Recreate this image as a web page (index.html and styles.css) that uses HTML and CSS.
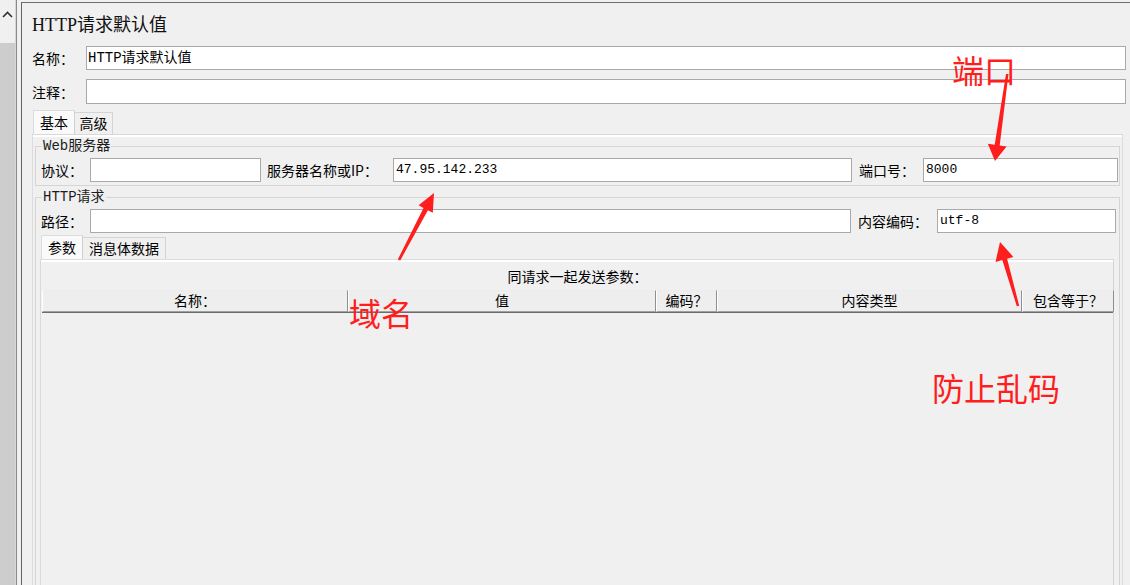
FILE: index.html
```html
<!DOCTYPE html>
<html lang="zh-CN">
<head>
<meta charset="utf-8">
<title>HTTP请求默认值</title>
<link rel="stylesheet" href="styles.css">
</head>
<body>
<div class="app">
  <div class="scroll">
    <div class="scroll-up">
      <svg width="11" height="7" viewBox="0 0 11 7"><polyline points="1,6 5.5,1.5 10,6" fill="none" stroke="#333" stroke-width="1.6"/></svg>
    </div>
    <div class="thumb"></div>
  </div>
  <div class="split"></div>
  <div class="main">
    <div class="title">HTTP请求默认值</div>
    <div class="row">
      <span class="lbl lbl-top">名称：</span>
      <div class="input input-name">HTTP请求默认值</div>
    </div>
    <div class="row">
      <span class="lbl lbl-top">注释：</span>
      <div class="input input-tall"></div>
    </div>
    <div class="tabs">
      <div class="tab active tab-basic">基本</div>
      <div class="tab tab-adv">高级</div>
    </div>
    <div class="tabpanel">
      <fieldset class="group">
        <legend>Web服务器</legend>
        <div class="frow">
          <span class="lbl w-proto">协议：</span>
          <div class="input w-in-proto"></div>
          <span class="lbl w-server">服务器名称或IP：</span>
          <div class="input w-in-server">47.95.142.233</div>
          <span class="lbl w-port">端口号：</span>
          <div class="input w-in-port">8000</div>
        </div>
      </fieldset>
      <fieldset class="group group-http">
        <legend>HTTP请求</legend>
        <div class="frow">
          <span class="lbl w-proto">路径：</span>
          <div class="input w-in-path"></div>
          <span class="lbl w-enc">内容编码：</span>
          <div class="input w-in-enc">utf-8</div>
        </div>
        <div class="tabs subtabs">
          <div class="tab active sub-a">参数</div>
          <div class="tab sub-b">消息体数据</div>
        </div>
        <div class="subpanel">
          <div class="caption">同请求一起发送参数：</div>
          <div class="thead">
            <div class="th">名称：</div>
            <div class="th">值</div>
            <div class="th">编码？</div>
            <div class="th">内容类型</div>
            <div class="th">包含等于？</div>
          </div>
          <div class="tbody"></div>
        </div>
      </fieldset>
    </div>
  </div>
</div>

<svg class="arrows" width="1130" height="585" viewBox="0 0 1130 585">
  <polygon fill="#fe1e1e" points="1006,74 1008.5,74 999.7,145.4 1006.6,146.4 995,161 987.8,143.8 994.7,144.8"/>
  <polygon fill="#fe1e1e" points="397.8,259.5 400.2,260.5 427.9,210.2 432.8,212.7 434,193 418.6,205.3 423.5,207.9"/>
  <polygon fill="#fe1e1e" points="1016.8,306.3 1019.2,305.7 1007.1,258.7 1013.4,256.9 1000,242 995.5,261.9 1002.3,260.1"/>
</svg>
<div class="note note-port">端口</div>
<div class="note note-domain">域名</div>
<div class="note note-enc">防止乱码</div>
</body>
</html>
```

FILE: styles.css
```css
html, body {
  margin: 0;
  padding: 0;
}
body {
  width: 1130px;
  height: 585px;
  overflow: hidden;
  position: relative;
  background: #f0f0f0;
  font-family: "Noto Sans CJK SC", sans-serif;
  font-size: 14px;
  color: #000;
}
.app {
  display: flex;
  height: 585px;
}
.scroll {
  width: 15px;
  border-right: 1px solid #d6d6d6;
  display: flex;
  flex-direction: column;
}
.scroll-up {
  height: 43px;
  box-sizing: border-box;
  padding-top: 11px;
  display: flex;
  justify-content: center;
}
.thumb {
  flex: 1;
  background: #cdcdcd;
}
.split {
  width: 4px;
  border-left: 1px solid #8a8a8a;
}
.main {
  flex: 1;
  min-width: 0;
  margin-top: 2px;
  border-top: 1px solid #6e6e6e;
  border-left: 1px solid #646464;
  padding: 0 4px 0 10px;
  display: flex;
  flex-direction: column;
}
.title {
  margin-top: 10px;
  height: 24px;
  line-height: 24px;
  font-family: "Liberation Serif", "Noto Sans CJK SC", serif;
  font-size: 18px;
  color: #111;
}
.row {
  display: flex;
  align-items: center;
  margin-top: 9px;
}
.lbl {
  font-size: 14px;
  line-height: 20px;
  white-space: nowrap;
  flex: none;
}
.lbl-top {
  width: 54px;
}
.input {
  height: 24px;
  box-sizing: border-box;
  border: 1px solid #a9a9a9;
  background: #fff;
  font-family: "Liberation Mono", "Noto Sans CJK SC", monospace;
  font-size: 13px;
  line-height: 22px;
  padding-left: 2px;
  white-space: nowrap;
  flex: none;
}
.row .input {
  flex: 1;
}
.input-name {
  font-size: 14px;
  padding-left: 1px;
}
.input-tall {
  height: 25px;
}
.tabs {
  display: flex;
  align-items: flex-end;
  margin-top: 6px;
  margin-left: 1px;
}
.tab {
  height: 22px;
  line-height: 21px;
  box-sizing: border-box;
  border-top: 1px solid #d4d4d4;
  border-right: 1px solid #d4d4d4;
  background: #f0f0f0;
  font-size: 14px;
  text-align: center;
  white-space: nowrap;
}
.tab.active {
  height: 24px;
  line-height: 23px;
  background: #fafafa;
  border-left: 1px solid #dcdcdc;
  border-top: 1px solid #dcdcdc;
  border-right: 1px solid #d0d0d0;
}
.tab-basic { width: 42px; }
.tab-adv { width: 38px; }
.tabpanel {
  flex: 1;
  min-height: 0;
  margin-right: 3px;
  border-top: 1px solid #d8d8d8;
  border-left: 1px solid #dcdcdc;
  border-right: 1px solid #dcdcdc;
  box-shadow: inset 0 2px 0 #fff;
  display: flex;
  flex-direction: column;
}
.group {
  margin: 3px 2px 0 2px;
  padding: 0 3px 3px 5px;
  border: 1px solid #d5d5d5;
  min-width: 0;
}
.group legend {
  padding: 0 1px;
  margin-left: 1px;
  font-family: "Liberation Mono", "Noto Sans CJK SC", monospace;
  font-size: 14px;
  line-height: 16px;
  color: #1c1c1c;
}
.group-http {
  flex: 1;
  min-height: 0;
  display: flex;
  flex-direction: column;
  padding-bottom: 0;
  border-bottom: none;
}
.frow {
  display: flex;
  align-items: center;
  margin-top: 4px;
}
.w-proto { width: 49px; }
.w-in-proto { width: 171px; }
.w-server { width: 126px; margin-left: 6px; }
.w-in-server { width: 459px; }
.w-port { width: 64px; margin-left: 7px; }
.w-in-port { width: 195px; }
.w-in-path { width: 761px; }
.w-enc { width: 79px; margin-left: 7px; }
.w-in-enc { width: 179px; }
.subtabs {
  margin-top: 2px;
  margin-left: 0;
}
.sub-a { width: 42px; }
.sub-b { width: 83px; }
.subpanel {
  flex: 1;
  margin-left: -1px;
  margin-right: 2px;
  border-top: 1px solid #dcdcdc;
  border-left: 1px solid #dadada;
  border-right: 1px solid #d4d4d4;
  box-shadow: inset 0 2px 0 #fff;
  padding: 0 0 0 1px;
  display: flex;
  flex-direction: column;
}
.caption {
  height: 30px;
  line-height: 30px;
  text-align: center;
  font-size: 14px;
  padding-top: 1px;
  box-sizing: border-box;
}
.thead {
  display: grid;
  grid-template-columns: 306px 308px 61px 305px 92px;
  height: 22px;
  border-bottom: 1px solid #6c6c6c;
}
.th {
  box-sizing: border-box;
  background: #eeeeee;
  border-top: 1px solid #ececec;
  border-left: 1px solid #ffffff;
  border-right: 1px solid #8f8f8f;
  border-bottom: 1px solid #a0a0a0;
  text-align: center;
  font-size: 14px;
  line-height: 19px;
}
.tbody {
  flex: 1;
}
.arrows {
  position: absolute;
  left: 0;
  top: 0;
  pointer-events: none;
}
.note {
  position: absolute;
  color: #fe1e1e;
  font-family: "Noto Sans CJK SC", sans-serif;
  font-size: 32px;
  line-height: 32px;
  white-space: nowrap;
}
.note-port { left: 952px; top: 53px; }
.note-domain { left: 349px; top: 296px; }
.note-enc { left: 932px; top: 371px; }
```
